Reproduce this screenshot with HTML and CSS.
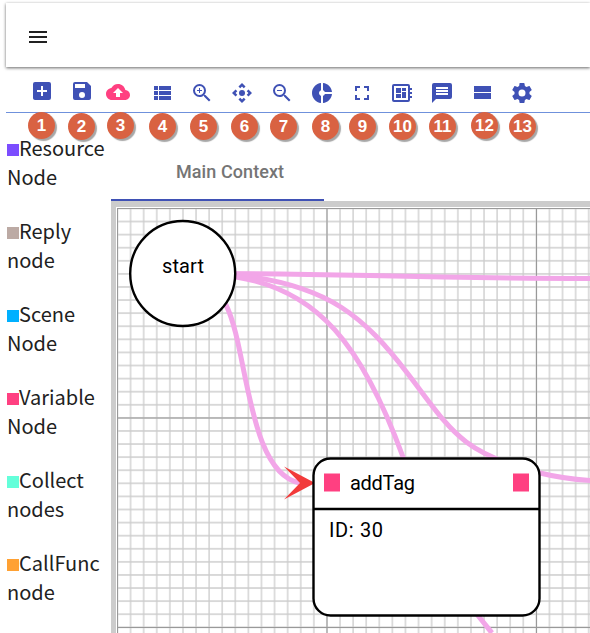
FILE: index.html
```html
<!DOCTYPE html>
<html lang="en">
<head>
<meta charset="utf-8">
<title>Context editor</title>
<link rel="stylesheet" href="styles.css">
</head>
<body>
<div class="app">
  <header class="topbar">
    <svg class="icon menu" viewBox="0 0 24 24"><path d="M3 18h18v-2H3v2zm0-5h18v-2H3v2zm0-7v2h18V6H3z"/></svg>
  </header>
  <nav class="toolbar">
    <div class="tool raised"><svg class="icon" viewBox="0 0 24 24"><path d="M19 3H5a2 2 0 0 0-2 2v14c0 1.100.9 2 2 2h14a2 2 0 0 0 2-2V5a2 2 0 0 0-2-2zm-2 10h-4v4h-2v-4H7v-2h4V7h2v4h4v2z"/></svg><span class="badge b1">1</span></div>
    <div class="tool raised"><svg class="icon" viewBox="0 0 24 24"><path d="M17 3H5a2 2 0 0 0-2 2v14a2 2 0 0 0 2 2h14a2 2 0 0 0 2-2V7l-4-4zm-5 16a3 3 0 1 1 0-6 3 3 0 0 1 0 6zm3-10H5V5h10v4z"/></svg><span class="badge b2">2</span></div>
    <div class="tool cloud"><svg class="icon" viewBox="0 0 24 24"><path d="M19.350 10.040C18.670 6.590 15.640 4 12 4 9.110 4 6.600 5.640 5.350 8.040 2.340 8.360 0 10.910 0 14c0 3.310 2.690 6 6 6h13c2.760 0 5-2.240 5-5 0-2.640-2.050-4.780-4.650-4.960zM14 13v4h-4v-4H7l5-5 5 5h-3z"/></svg><span class="badge b3">3</span></div>
    <div class="tool"><svg class="icon" viewBox="0 0 24 24"><path d="M4 14h4v-4H4v4zm0 5h4v-4H4v4zM4 9h4V5H4v4zm5 5h12v-4H9v4zm0 5h12v-4H9v4zM9 5v4h12V5H9z"/></svg><span class="badge b4">4</span></div>
    <div class="tool"><svg class="icon" viewBox="0 0 24 24"><path d="M15.500 14h-.79l-.28-.27A6.470 6.470 0 0 0 16 9.500 6.500 6.500 0 1 0 9.500 16c1.610 0 3.090-.59 4.230-1.570l.27.28v.79l5 4.990L20.490 19l-4.990-5zm-6 0a4.500 4.500 0 1 1 0-9 4.500 4.500 0 0 1 0 9zM12 10h-2v2H9v-2H7V9h2V7h1v2h2v1z"/></svg><span class="badge b5">5</span></div>
    <div class="tool"><svg class="icon" viewBox="0 0 24 24"><path d="M15.540 5.540L13.770 7.300 12 5.540 10.230 7.300 8.460 5.540 12 2zm2.920 10l-1.760-1.770L18.460 12l-1.760-1.770 1.760-1.770L22 12zm-10 2.920l1.770-1.760L12 18.460l1.770-1.760 1.770 1.760L12 22zm-2.920-10l1.760 1.770L5.540 12l1.760 1.770-1.760 1.770L2 12z"/><circle cx="12" cy="12" r="3"/></svg><span class="badge b6">6</span></div>
    <div class="tool"><svg class="icon" viewBox="0 0 24 24"><path d="M15.500 14h-.79l-.28-.27A6.470 6.470 0 0 0 16 9.500 6.500 6.500 0 1 0 9.500 16c1.610 0 3.090-.59 4.230-1.570l.27.28v.79l5 4.990L20.490 19l-4.990-5zm-6 0a4.500 4.500 0 1 1 0-9 4.500 4.500 0 0 1 0 9zM7 9h5v1H7z"/></svg><span class="badge b7">7</span></div>
    <div class="tool"><svg class="icon" viewBox="0 0 24 24"><path d="M11 9.160V2c-5 .5-9 4.790-9 10s4 9.500 9 10v-7.160c-1-.41-2-1.520-2-2.840s1-2.430 2-2.840zM14.860 11H22c-.48-4.750-4-8.530-9-9v7.160c1 .3 1.520.98 1.860 1.840zM13 14.840V22c5-.47 8.520-4.250 9-9h-7.140c-.34.86-.86 1.540-1.860 1.840z"/></svg><span class="badge b8">8</span></div>
    <div class="tool"><svg class="icon" viewBox="0 0 24 24"><path d="M7 14H5v5h5v-2H7v-3zm-2-4h2V7h3V5H5v5zm12 7h-3v2h5v-5h-2v3zM14 5v2h3v3h2V5h-5z"/></svg><span class="badge b9">9</span></div>
    <div class="tool"><svg class="icon" viewBox="0 0 24 24"><path d="M22 9V7h-2V5a2 2 0 0 0-2-2H4a2 2 0 0 0-2 2v14a2 2 0 0 0 2 2h14a2 2 0 0 0 2-2v-2h2v-2h-2v-2h2v-2h-2V9h2zm-4 10H4V5h14v14zM6 13h5v4H6zm6-6h4v3h-4zM6 7h5v5H6zm6 4h4v6h-4z"/></svg><span class="badge b10">10</span></div>
    <div class="tool"><svg class="icon" viewBox="0 0 24 24"><path d="M20 2H4a2 2 0 0 0-1.990 2L2 22l4-4h14a2 2 0 0 0 2-2V4a2 2 0 0 0-2-2zm-2 12H6v-2h12v2zm0-3H6V9h12v2zm0-3H6V6h12v2z"/></svg><span class="badge b11">11</span></div>
    <div class="tool"><svg class="icon" viewBox="0 0 24 24"><path d="M4 18h17v-6H4v6zM4 5v6h17V5H4z"/></svg><span class="badge b12">12</span></div>
    <div class="tool"><svg class="icon" viewBox="0 0 24 24"><path d="M19.430 12.980c.04-.32.07-.64.07-.98s-.03-.66-.07-.98l2.110-1.650c.19-.15.24-.42.12-.64l-2-3.460c-.12-.22-.39-.3-.61-.22l-2.490 1c-.52-.4-1.080-.73-1.690-.98l-.38-2.650A.49.49 0 0 0 14 2h-4c-.25 0-.46.18-.49.42l-.38 2.650c-.61.25-1.170.59-1.690.98l-2.490-1c-.23-.09-.49 0-.61.22l-2 3.460c-.13.22-.07.49.12.64l2.110 1.650c-.04.32-.07.65-.07.98s.03.66.07.98l-2.110 1.650c-.19.15-.24.42-.12.64l2 3.460c.12.22.39.3.61.22l2.490-1c.52.4 1.080.73 1.690.98l.38 2.650c.03.24.24.42.49.42h4c.25 0 .46-.18.49-.42l.38-2.650c.61-.25 1.170-.59 1.690-.98l2.490 1c.23.09.49 0 .61-.22l2-3.460c.12-.22.07-.49-.12-.64l-2.110-1.650zM12 15.500a3.500 3.500 0 1 1 0-7 3.500 3.500 0 0 1 0 7z"/></svg><span class="badge b13">13</span></div>
  </nav>
  <div class="workspace">
    <aside class="palette">
      <div class="kind"><i class="swatch violet"></i>Resource<br>Node</div>
      <div class="kind"><i class="swatch taupe"></i>Reply<br>node</div>
      <div class="kind"><i class="swatch blue"></i>Scene<br>Node</div>
      <div class="kind"><i class="swatch pink"></i>Variable<br>Node</div>
      <div class="kind"><i class="swatch mint"></i>Collect<br>nodes</div>
      <div class="kind"><i class="swatch orange"></i>CallFunc<br>node</div>
    </aside>
    <main class="editor">
      <div class="tabs"><div class="tab">Main Context</div></div>
      <div class="canvas">
        <svg class="graph" width="473" height="425" viewBox="117 208 473 425">
          <defs>
            <pattern id="minor" x="116.500" y="207.500" width="13.090" height="13.090" patternUnits="userSpaceOnUse"><path d="M1 0V13.090M0 1H13.090" stroke="#ccc" stroke-width="1.300" fill="none"/></pattern>
          </defs>
          <rect x="117" y="208" width="473" height="425" fill="url(#minor)"/>
          <path d="M117.500 208V633M327 208V633M536.500 208V633M117 208.500H590M117 418H590M117 627.500H590" stroke="#999" fill="none"/>
          <g class="edges">
            <path d="M183 273.500C330 272.500 400 278.500 600 278.500"/>
            <path d="M183 273.500L236 275C330 285 365 318 408 374S460 453 540 473C560 478 575 480 600 481"/>
            <path d="M183 273.500L236 277C318 290 362 345 403 457C420 515 442 575 492 633"/>
            <path d="M215 285L226 305C248 348 247 473 300 483"/>
          </g>
          <path class="arrow" d="M284 466.500L315 483L284 499.500L300 483Z"/>
          <circle class="shape" cx="182.700" cy="273.500" r="52.500"/>
          <text x="162" y="273" textLength="42">start</text>
          <rect class="shape" x="313.500" y="458.500" width="226" height="157" rx="17"/>
          <path class="shape" d="M313.500 509H539.500"/>
          <rect class="port" x="324" y="473.500" width="16" height="18"/>
          <rect class="port" x="513" y="473.500" width="16" height="18"/>
          <text x="350" y="490" textLength="65">addTag</text>
          <text x="329" y="537" textLength="54">ID: 30</text>
        </svg>
      </div>
    </main>
  </div>
</div>
</body>
</html>
```
FILE: styles.css
```css
* { box-sizing: border-box; }
body { margin: 0; width: 590px; height: 633px; overflow: hidden; background: #fff; font-family: Roboto, sans-serif; }
.app { padding: 3px 0 0 6px; height: 633px; overflow: hidden; }
.topbar { height: 64px; padding: 22px 20px; background: #fff; box-shadow: 0 1px 3px rgba(0,0,0,.6); position: relative; }
.icon { display: block; width: 24px; height: 24px; fill: #3f51b5; flex: none; }
.menu { fill: #212121; }
.toolbar { display: flex; height: 46px; padding-left: 16px; border-bottom: 1px solid #6f91dc; }
.tool { position: relative; width: 40px; padding: 14px 4px 0; }
.raised { padding: 12px 8px 0; }
.cloud { width: 44px; padding-top: 13px; }
.cloud .icon { fill: #ff4081; }
.badge { position: absolute; z-index: 2; top: 46px; left: 4px; width: 27px; height: 27px; border-radius: 50%; background: #d96242; color: #fff; font: bold 17px/27px "Liberation Sans", sans-serif; text-align: center; box-shadow: 2px 2px 1px rgba(0,0,0,.35); }
.b1 { left: 6px; top: 45px; }
.b2 { left: 6px; }
.b3 { left: 5px; top: 45px; }
.b4, .b9, .b10, .b11, .b13 { left: 3px; }
.b5, .b7 { left: 4px; }
.b6 { left: 5px; }
.b8 { left: 6px; }
.b12 { left: 5px; top: 45px; }
.workspace { display: flex; height: 520px; }
.palette { width: 105px; padding: 20px 0 0 1px; }
.kind { height: 83px; font: 20px/29px "Noto Sans CJK SC", sans-serif; color: #212121; white-space: nowrap; }
.swatch { display: inline-block; width: 12px; height: 12px; vertical-align: 0; }
.violet { background: #7c4dff; }
.taupe { background: #bcaaa4; }
.blue { background: #00b0ff; }
.pink { background: #ff4081; }
.mint { background: #64ffda; }
.orange { background: #ffa133; }
.editor { flex: 1; min-width: 0; }
.tabs { height: 88px; padding-top: 40px; }
.tab { width: 213px; height: 48px; padding-left: 65px; border-bottom: 2px solid #3f51b5; color: #757575; font-size: 18px; font-weight: 500; line-height: 38px; letter-spacing: .08px; }
.canvas { height: 432px; border: solid #ccc; border-width: 6px 0 0 5px; padding: 1px 0 0 1px; }
.graph { display: block; }
.graph text { font: 20px Roboto, sans-serif; fill: #000; }
.edges { fill: none; stroke: #f2a6e8; stroke-width: 5px; stroke-linejoin: round; }
.arrow { fill: #f23a3a; }
.shape { fill: #fff; stroke: #000; stroke-width: 2.4px; }
.port { fill: #ff4081; }
```
